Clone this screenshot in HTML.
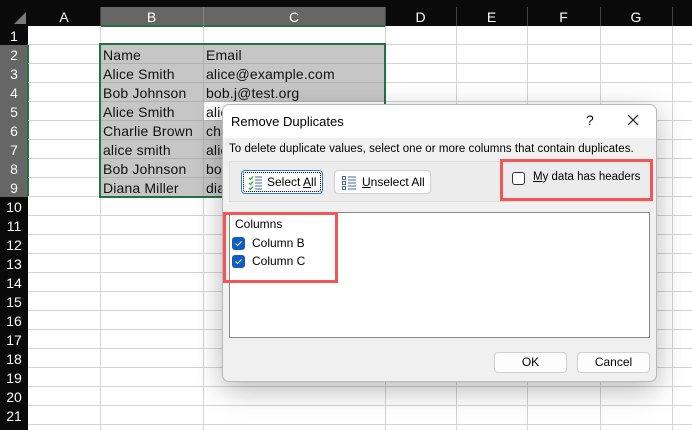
<!DOCTYPE html>
<html><head><meta charset="utf-8"><style>
*{margin:0;padding:0;box-sizing:border-box}
body{width:692px;height:430px;overflow:hidden;background:#fff;position:relative;font-family:"Liberation Sans",sans-serif}
.a{position:absolute}
.hl{position:absolute;background:#d4d4d4}
.ch{position:absolute;top:7px;height:19px;color:#fff;font-size:14px;text-align:center;line-height:20px}
.rh{position:absolute;left:0;width:28px;height:19px;color:#fff;font-size:14px;text-align:center;line-height:21px}
.cell{position:absolute;font-size:14px;color:#111;line-height:21px;padding-left:3px;white-space:nowrap;overflow:hidden;letter-spacing:0.15px}
.dt{font-size:12px;color:#000}
.btn{position:absolute;background:#fdfdfd;border:1px solid #d0d0d0;border-radius:4px;font-size:12px;color:#000;text-align:center}
.cb{position:absolute;width:13px;height:13px;background:#0f5dc0;border-radius:3px}
</style></head><body>
<div class="a" style="left:0;top:0;width:692px;height:26px;background:#0a0a0a"></div>
<div class="a" style="left:0;top:26px;width:28px;height:404px;background:#0a0a0a"></div>
<div class="a" style="left:100px;top:7px;width:285px;height:19px;background:#666"></div>
<div class="a" style="left:0;top:45px;width:28px;height:152px;background:#666"></div>
<svg class="a" style="left:14px;top:12px" width="12" height="12"><polygon points="12,0 12,12 0,12" fill="#7a7a7a"/></svg>
<div class="a" style="left:100px;top:25px;width:285px;height:2px;background:#217346"></div>
<div class="a" style="left:27px;top:44px;width:2px;height:153px;background:#217346"></div>
<div class="ch" style="left:28px;width:72px">A</div>
<div class="ch" style="left:100px;width:103px">B</div>
<div class="ch" style="left:203px;width:182px">C</div>
<div class="ch" style="left:385px;width:71px">D</div>
<div class="ch" style="left:456px;width:71px">E</div>
<div class="ch" style="left:527px;width:73px">F</div>
<div class="ch" style="left:600px;width:72px">G</div>
<div class="a" style="left:203px;top:7px;width:1px;height:19px;background:#888"></div>
<div class="a" style="left:456px;top:7px;width:1px;height:19px;background:#444"></div>
<div class="a" style="left:527px;top:7px;width:1px;height:19px;background:#444"></div>
<div class="a" style="left:600px;top:7px;width:1px;height:19px;background:#444"></div>
<div class="a" style="left:672px;top:7px;width:1px;height:19px;background:#444"></div>
<div class="a" style="left:100px;top:7px;width:1px;height:19px;background:#444"></div>
<div class="a" style="left:385px;top:7px;width:1px;height:19px;background:#444"></div>
<div id="g"></div>
<script>
var s='';
for(var i=1;i<=21;i++){var y=26+19*(i-1);s+='<div class="rh" style="top:'+y+'px">'+i+'</div>';s+='<div class="hl" style="left:28px;top:'+(y+18)+'px;width:664px;height:1px"></div>';}
[100,203,385,456,527,600,672].forEach(function(x){s+='<div class="hl" style="left:'+x+'px;top:26px;width:1px;height:404px"></div>';});
var B=['Name','Alice Smith','Bob Johnson','Alice Smith','Charlie Brown','alice smith','Bob Johnson','Diana Miller'];
var C=['Email','alice@example.com','bob.j@test.org','alice@example.com','charlie@example.com','alice@example.com','bob.j@test.org','diana@example.com'];
s+='<div class="a" style="left:100px;top:44px;width:285px;height:153px;background:#c6c6c6"></div>';
for(var j=0;j<8;j++){var y=45+19*j;
s+='<div class="a" style="left:100px;top:'+(y+18)+'px;width:285px;height:1px;background:#b0b0b0"></div>';
s+='<div class="cell" style="left:100px;top:'+y+'px;width:103px;height:18px">'+B[j]+'</div>';
s+='<div class="cell" style="left:203px;top:'+y+'px;width:182px;height:18px;'+(j==3?'background:#fff;':'')+'">'+C[j]+'</div>';}
s+='<div class="a" style="left:203px;top:44px;width:1px;height:153px;background:#b0b0b0"></div>';
s+='<div class="a" style="left:99px;top:43px;width:287px;height:155px;border:2px solid #217346"></div>';
document.getElementById('g').innerHTML=s;
</script>
<div class="a" style="left:222px;top:104px;width:435px;height:278px;background:#f0f0f0;border:1px solid #b8b8b8;border-radius:7px;box-shadow:0 8px 28px rgba(0,0,0,0.28);overflow:hidden">
 <div class="a" style="left:0;top:0;width:435px;height:33px;background:#fff"></div>
 <div class="a dt" style="left:8px;top:9px;font-size:13px">Remove Duplicates</div>
 <div class="a" style="left:363px;top:7px;font-size:14px">?</div>
 <svg class="a" style="left:404px;top:9px" width="12" height="12"><path d="M1 1L11 11M11 1L1 11" stroke="#222" stroke-width="1.2"/></svg>
 <div class="a dt" style="left:6px;top:38px;font-size:11.5px;letter-spacing:0.05px">To delete duplicate values, select one or more columns that contain duplicates.</div>
 <div class="a" style="left:6px;top:56px;width:423px;height:41px;border:1px solid #dcdcdc;background:#ececec"></div>
 <div class="btn" style="left:18px;top:65px;width:82px;height:24px;border:1px solid #2a7bd8;line-height:22px"><div class="a" style="left:1px;top:1px;right:1px;bottom:1px;border:1px dotted #000;border-radius:2px"></div>
  <svg class="a" style="left:6px;top:4px" width="14" height="15"><path d="M1 3l1.5 1.5L5 1.5M1 8l1.5 1.5L5 6.5M1 13l1.5 1.5L5 11.5" stroke="#2a9a2a" fill="none" stroke-width="1.2"/><path d="M7 2h7M7 5h7M7 8h7M7 11h7M7 14h7" stroke="#4a6a9a" stroke-width="1"/></svg>
  <span style="position:absolute;left:25px;top:0">Select <u>A</u>ll</span></div>
 <div class="btn" style="left:111px;top:65px;width:97px;height:24px;line-height:22px">
  <svg class="a" style="left:7px;top:4px" width="14" height="15"><rect x="0.5" y="1.5" width="3" height="3" stroke="#4a6a9a" fill="none"/><rect x="0.5" y="6.5" width="3" height="3" stroke="#4a6a9a" fill="none"/><rect x="0.5" y="11.5" width="3" height="3" stroke="#4a6a9a" fill="none"/><path d="M6 2h8M6 5h8M6 8h8M6 11h8M6 14h8" stroke="#4a6a9a" stroke-width="1"/></svg>
  <span style="position:absolute;left:27px;top:0"><u>U</u>nselect All</span></div>
 <div class="a" style="left:277px;top:54px;width:153px;height:42px;border:3px solid #f25656"></div>
 <div class="a" style="left:289px;top:67px;width:13px;height:13px;border:1px solid #333;border-radius:3px;background:#fff"></div>
 <div class="a dt" style="left:310px;top:66px;font-size:11.5px"><u>M</u>y data has headers</div>
 <div class="a" style="left:6px;top:107px;width:421px;height:126px;background:#fff;border:1px solid #888"></div>
 <div class="a" style="left:0;top:107px;width:115px;height:71px;border:3px solid #f25656"></div>
 <div class="a dt" style="left:12px;top:112px">Columns</div>
 <div class="cb" style="left:9px;top:132px"></div><svg class="a" style="left:9px;top:132px" width="13" height="13"><path d="M3.5 6.5l2 2 4-4" stroke="#fff" fill="none" stroke-width="1"/></svg>
 <div class="a dt" style="left:29px;top:131px">Column B</div>
 <div class="cb" style="left:9px;top:150px"></div><svg class="a" style="left:9px;top:150px" width="13" height="13"><path d="M3.5 6.5l2 2 4-4" stroke="#fff" fill="none" stroke-width="1"/></svg>
 <div class="a dt" style="left:29px;top:149px">Column C</div>
 <div class="btn" style="left:271px;top:247px;width:73px;height:21px;line-height:19px">OK</div>
 <div class="btn" style="left:354px;top:247px;width:73px;height:21px;line-height:19px">Cancel</div>
</div>
</body></html>
